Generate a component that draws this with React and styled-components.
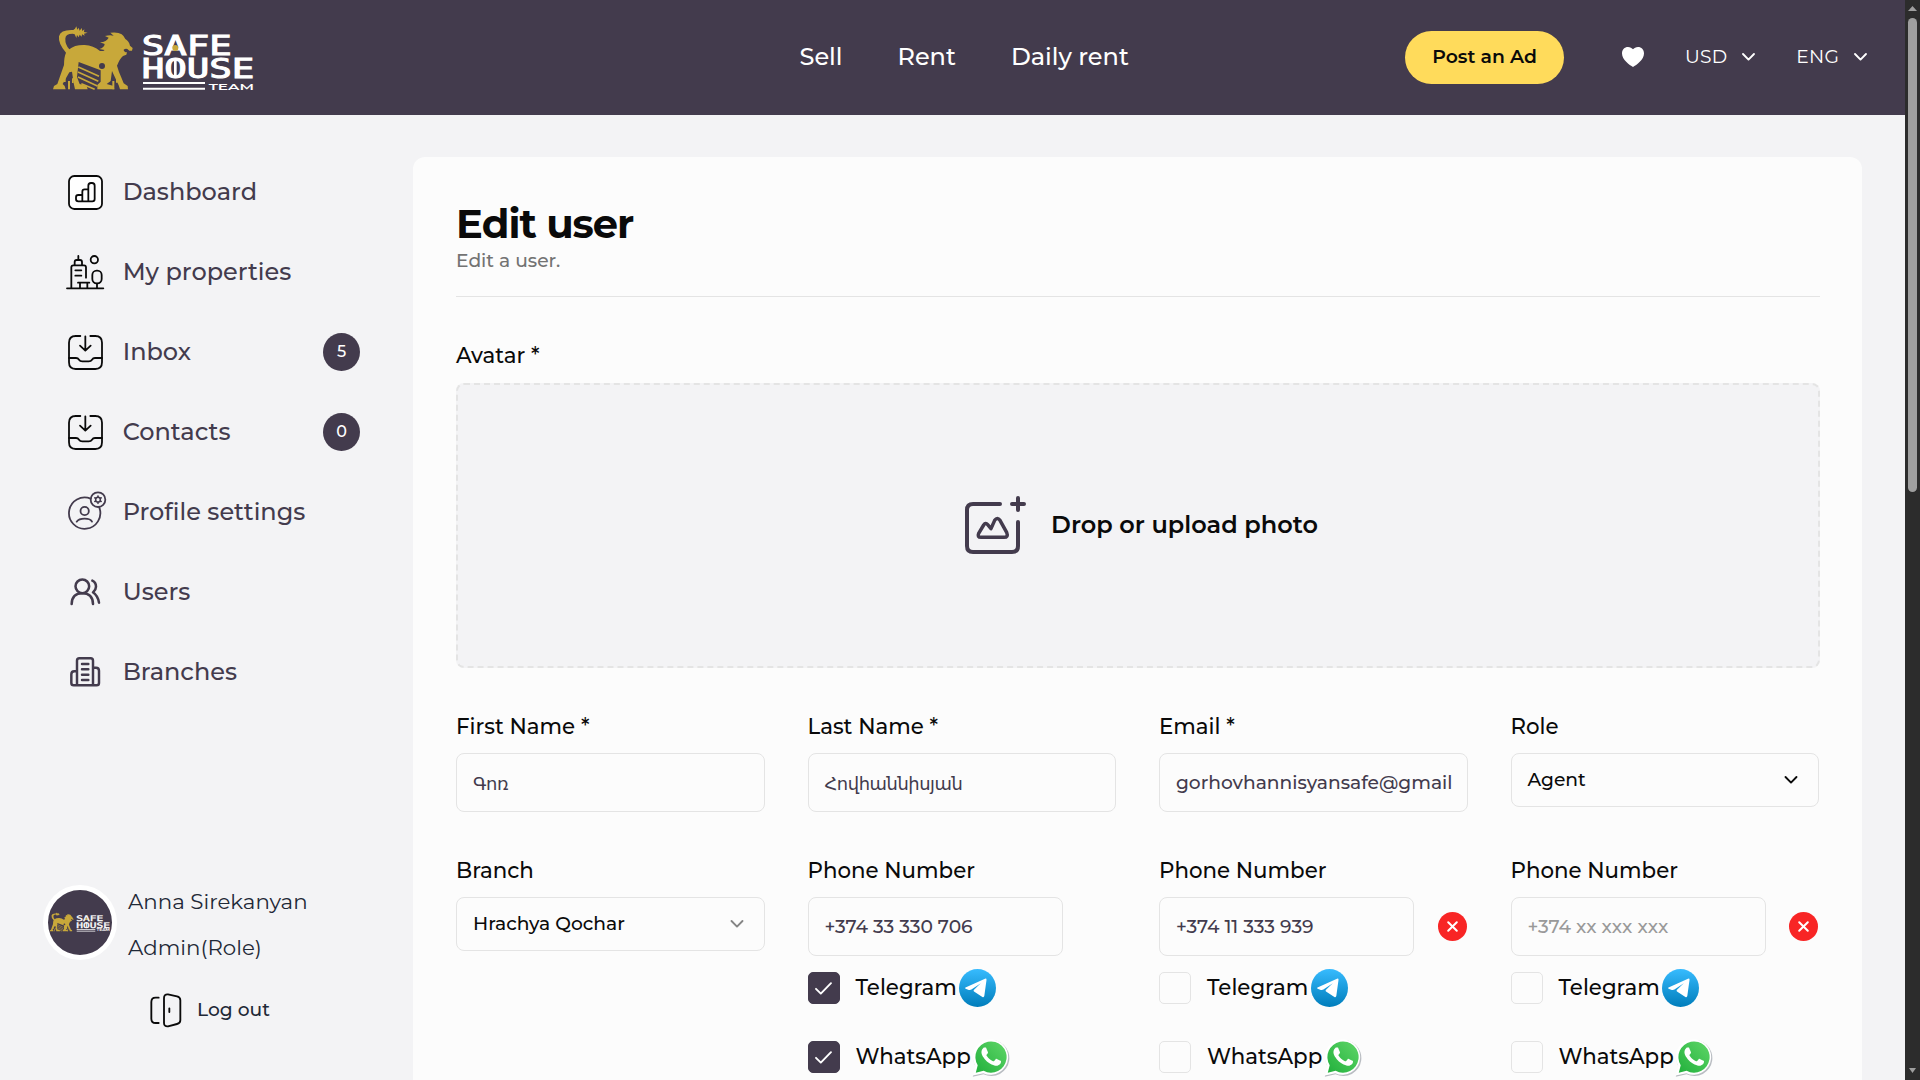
import React from 'react';
import styled, { createGlobalStyle } from 'styled-components';

const color = {
  plum: '#433b4d',
  page: '#f3f3f5',
  card: '#fcfcfc',
  line: '#e4e4e4',
  gold: '#c8a83a',
  ink: '#0a0a0a',
  slate: '#1f2937',
};

const GlobalStyle = createGlobalStyle`
  *, *::before, *::after { box-sizing: border-box; }
  html, body { margin: 0; padding: 0; }
  body {
    font-family: Montserrat, "DejaVu Sans", sans-serif;
    font-weight: 500;
    color: ${color.ink};
    background: ${color.page};
    overflow: hidden;
  }
  svg { display: block; flex: none; overflow: visible; }
`;

const Window = styled.div`
  display: flex;
  width: 1920px;
  height: 1080px;
  overflow: hidden;
`;

const Page = styled.div`
  display: flex;
  flex-direction: column;
  width: 1905px;
  height: 1080px;
  overflow: hidden;
`;

/* Header */
const Header = styled.header`
  flex: none;
  display: flex;
  align-items: center;
  height: 115px;
  padding: 0 38px 2px 44px;
  background: ${color.plum};
  color: #fff;
`;

const Nav = styled.nav`
  display: flex;
  gap: 55px;
  margin-left: 535.5px;
  font-size: 24px;
  line-height: 32px;
  white-space: nowrap;
`;

const Actions = styled.div`
  display: flex;
  align-items: center;
  margin-left: auto;
`;

const PostButton = styled.button`
  width: 159px;
  height: 53px;
  padding: 0;
  margin: 2px 58px 0 0;
  border: 0;
  border-radius: 27px;
  background: #ffdb5b;
  color: ${color.ink};
  font: 600 18.8px/24px Montserrat, sans-serif;
  padding-bottom: 2px;
`;

const Picker = styled.div`
  display: flex;
  align-items: center;
  gap: 15px;
  margin-left: 41px;
  font-size: 18.67px;
  font-weight: 400;
  line-height: 24px;
  letter-spacing: 0.2px;
`;

/* Sidebar */
const Body = styled.div`
  flex: 1;
  min-height: 0;
  display: flex;
`;

const Sidebar = styled.aside`
  flex: none;
  display: flex;
  flex-direction: column;
  width: 413px;
  height: 965px;
  padding-top: 36px;
`;

const MenuItem = styled.a`
  display: flex;
  align-items: center;
  height: 80px;
  padding: 0 53px 0 66px;
  font-size: 24px;
  line-height: 32px;
  color: ${color.plum};
`;

const MenuLabel = styled.span`
  margin: 2px 0 0 18.7px;
`;

const Badge = styled.span`
  display: flex;
  align-items: center;
  justify-content: center;
  width: 37px;
  height: 38px;
  margin: 1px 0 0 auto;
  border-radius: 50%;
  background: ${color.plum};
  color: #fff;
  font-size: 16px;
  line-height: 20px;
`;

const Account = styled.div`
  display: flex;
  gap: 11px;
  margin-top: auto;
  padding-left: 43px;
  align-items: center;
`;

const Avatar = styled.div`
  display: flex;
  align-items: center;
  justify-content: center;
  width: 74px;
  height: 75px;
  border: 5px solid #fff;
  border-radius: 50%;
  background: ${color.plum};
`;

const AccountText = styled.div`
  display: flex;
  flex-direction: column;
  font-size: 21.33px;
  font-weight: 400;
  line-height: 46px;
  color: ${color.slate};
  margin-top: 4px;
`;

const LogOut = styled.a`
  display: flex;
  align-items: center;
  gap: 15px;
  margin: 22px 0 52px 150px;
  font-size: 18.67px;
  line-height: 28px;
  color: ${color.slate};
`;

/* Form card */
const Card = styled.main`
  flex: none;
  width: 1449px;
  height: 1100px;
  margin-top: 42px;
  padding: 43px 42px 0 43px;
  border-radius: 12px;
  background: ${color.card};
`;

const Title = styled.h1`
  margin: 0;
  font-size: 40px;
  font-weight: 700;
  line-height: 48px;
  letter-spacing: -1px;
`;

const Subtitle = styled.p`
  margin: 0;
  font-size: 18.67px;
  line-height: 26px;
  color: #737373;
`;

const Divider = styled.hr`
  margin: 22px 0 42px;
  border: 0;
  height: 1px;
  background: ${color.line};
`;

const Label = styled.div`
  font-size: 21.33px;
  line-height: 32px;
  white-space: nowrap;
`;

const DropZone = styled.div`
  display: flex;
  align-items: center;
  justify-content: center;
  gap: 25px;
  height: 285px;
  margin: 12px 0 42px;
  padding: 0 0 2px 7px;
  border: 2px dashed ${color.line};
  border-radius: 8px;
  background: ${color.page};
  font-size: 24px;
  font-weight: 600;
  line-height: 32px;
`;

const FormGrid = styled.div`
  display: grid;
  grid-template-columns: repeat(4, 308.5px);
  justify-content: start;
  column-gap: 43px;
  row-gap: 42px;
`;

const Field = styled.div`
  display: flex;
  flex-direction: column;
  min-width: 0;
`;

const InputRow = styled.div`
  display: flex;
  align-items: center;
  justify-content: space-between;
  margin-top: 11px;
`;

const InputBox = styled.div`
  width: ${(p) => p.$width || '100%'};
  height: 59px;
  padding: ${(p) => (p.$armenian ? '1px 16px 0' : '0 16px')};
  border: 1px solid ${color.line};
  border-radius: 8px;
  font-size: ${(p) => (p.$armenian ? '17.9px' : '18.67px')};
  letter-spacing: ${(p) => (p.$armenian ? '-0.45px' : 'normal')};
  line-height: 57px;
  color: ${(p) => (p.$placeholder ? '#999' : color.plum)};
  white-space: nowrap;
  overflow: hidden;
`;

const SelectBox = styled.div`
  display: flex;
  align-items: center;
  justify-content: space-between;
  height: 54px;
  margin-top: 11px;
  padding: 0 20px 0 16px;
  border: 1px solid ${color.line};
  border-radius: 8px;
  font-size: 18.67px;
  line-height: 52px;
`;

const RemoveButton = styled.button`
  display: flex;
  align-items: center;
  justify-content: center;
  width: 29px;
  height: 29px;
  margin-right: 1px;
  padding: 0;
  border: 0;
  border-radius: 50%;
  background: #f82525;
`;

const CheckRow = styled.label`
  display: flex;
  align-items: center;
  height: 32px;
  margin-top: ${(p) => (p.$first ? '16px' : '37px')};
  font-size: 21.33px;
  line-height: 30px;
`;

const CheckBox = styled.span`
  display: flex;
  align-items: center;
  justify-content: center;
  width: 32px;
  height: 32px;
  margin-right: 16px;
  border: 1px solid ${(p) => (p.$on ? color.plum : color.line)};
  border-radius: 5px;
  background: ${(p) => (p.$on ? color.plum : color.card)};
`;

const ChannelName = styled.span`
  margin-bottom: 2px;
`;

const ChannelIcon = styled.span`
  margin-left: ${(p) => p.$gap};
`;

/* Scrollbar */
const ScrollTrack = styled.div`
  display: flex;
  flex-direction: column;
  align-items: center;
  width: 15px;
  height: 1080px;
  padding: 6px 0 7px;
  background: #2c2c2c;
`;

const ScrollThumb = styled.div`
  width: 9px;
  height: 474px;
  margin: 7px 0 auto;
  border-radius: 5px;
  background: #9f9f9f;
`;

const Mark = styled.text`
  font-family: "DejaVu Sans Mono", monospace;
  font-weight: 400;
  font-size: 77px;
  fill: #fff;
  stroke: #fff;
  stroke-width: 3px;
`;

const TeamMark = styled.text`
  font-family: Montserrat, sans-serif;
  font-weight: 600;
  font-size: 27px;
  fill: #fff;
`;

function Logo({ width }) {
  return (
    <svg width={width} height={(width * 84) / 220} viewBox="0 0 660 252">
      <path
        fill={color.gold}
        d="M27 223 L30 213 L40 207 L60 150 Q60 126 66 113 Q42 86 45 64 Q50 43 88 45 L93 41 L97 34 L100 44 L104 38 L107 47 L113 39 L115 48 L121 43 L120 51 L131 53 L120 56 L122 62 L114 58 L113 65 L107 59 L104 67 L99 60 L97 69 L92 58 L86 56 Q64 56 64 71 Q63 88 76 103 Q92 89 122 90 Q148 92 168 108 L178 108 L182 105 L166 102 Q181 98 182 87 L168 82 Q188 80 194 68 L183 63 Q198 59 209 62 L199 53 Q222 50 233 58 Q241 64 244 72 Q255 78 258 92 L266 99 L264 107 L256 107 L250 102 Q244 100 239 104 Q239 111 249 112 L247 119 L237 123 Q228 130 219 152 Q224 170 231 185 L239 205 L251 213 L252 223 L228 223 L224 211 L204 168 L200 198 L188 207 L209 213 L211 223 L160 223 L160 210 L170 200 L170 166 L104 141 L99 186 L107 207 L128 213 L131 223 L93 223 L89 205 L84 170 L76 172 L56 207 L62 213 L65 223 Z"
      />
      <circle cx="174" cy="153" r="9" fill={color.plum} />
      <g stroke={color.gold} strokeWidth="5" fill="none">
        <path d="M103 156 L165 184 M102 171 L163 199 M102 186 L160 213 M112 206 L152 223" />
      </g>
      <path
        fill={color.gold}
        d="M72 198h6v25h-6z M60 189h5v12h-5z M84 190h5v14h-5z M205 198h6v25h-6z M190 190h6v11h-6z M216 192h5v11h-5z"
      />
      <Mark x="293" y="120" textLength="270" lengthAdjust="spacingAndGlyphs">SAFE</Mark>
      <Mark x="293" y="189" textLength="338" lengthAdjust="spacingAndGlyphs">HOUSE</Mark>
      <TeamMark x="494" y="224" textLength="136" lengthAdjust="spacingAndGlyphs">TEAM</TeamMark>
      <circle cx="394" cy="99" r="9" fill={color.gold} />
      <path fill="#fff" d="M297 201h186v6H297z M297 218h186v6H297z M390 134h8v54h-8z" />
    </svg>
  );
}

const Chevron = ({ stroke = '#fff', w = 13 }) => (
  <svg width={w} height="8" viewBox="0 0 13 8" fill="none" stroke={stroke} strokeWidth="1.9" strokeLinecap="round" strokeLinejoin="round">
    <path d="M1 1 6.5 6.6 12 1" />
  </svg>
);

const Heart = () => (
  <svg width="22" height="20" viewBox="0 0 22 20" fill="#fff">
    <path d="M11 20C7.500 17.700 0 12.600 0 6.400 0 2.700 2.600 0 6 0c2.100 0 3.900 1 5 2.300C12.100 1 13.900 0 16 0c3.400 0 6 2.700 6 6.400C22 12.600 14.500 17.700 11 20z" />
  </svg>
);

const MenuIcon = ({ y, stroke = '#0a0a0a', sw = 5.4, children }) => (
  <svg width="38" height="38" viewBox={`78 ${y} 114 114`} fill="none" stroke={stroke} strokeWidth={sw} strokeLinecap="round" strokeLinejoin="round">
    {children}
  </svg>
);

const DashboardIcon = () => (
  <MenuIcon y={66}>
    <rect x="87" y="78" width="99" height="99" rx="16" fill="#fff" />
    <path d="M108 142 q0-7 7-7 h12 v19 h-12 q-7 0-7-7z M127 154 V125 q0-7 7-7 h11 V154z M145 154 V107 q0-8 8-8 h3 q8 0 8 8 v40 q0 7-7 7z" />
  </MenuIcon>
);

const PropertiesIcon = () => (
  <MenuIcon y={306}>
    <path d="M81 415H190 M94 414V352q0-6 6-6h32q6 0 6 6v31 M104 345v-9q0-6 6-6h10q6 0 6 6v9 M115 329v-11" />
    <path d="M106 361h18 M106 377h18 M114 398h34 M120 399v15 M142 399v15 M171 401v13" />
    <rect x="157" y="362" width="28" height="38" rx="13" />
    <circle cx="163" cy="329" r="11" />
  </MenuIcon>
);

const InboxIcon = () => (
  <MenuIcon y={546}>
    <path d="M121 558H107q-20 0-20 20v59q0 20 20 20h59q20 0 20-20v-59q0-20-20-20H151" />
    <path d="M136 559v42 M120 587l16 15 16-15 M87 624h21q6 0 9 5t10 5h19q7 0 10-5t9-5h21" />
  </MenuIcon>
);

const ProfileIcon = () => (
  <MenuIcon y={126} stroke={color.plum} sw={5.4}>
    <path d="M152 146a47 47 0 1 0 26 27" />
    <circle cx="134" cy="183" r="12.500" />
    <path d="M110 215q6-9 24-9t22 9" />
    <circle cx="174" cy="149" r="22" />
    <circle cx="174" cy="149" r="7" strokeWidth="4.500" />
    <path strokeWidth="5" d="M174 138v2 M174 158v2 M164.500 143.500l2 1 M181.500 153.500l2 1 M164.500 154.500l2-1 M181.500 144.500l2-1" />
  </MenuIcon>
);

const UsersIcon = () => (
  <MenuIcon y={366} stroke={color.plum} sw={7.6}>
    <circle cx="127" cy="409" r="20.500" />
    <path d="M95 462q1-32 32-32t32 32 M157 392q11 5 11 18 0 9-9 17 15 11 18 31" />
  </MenuIcon>
);

const BranchesIcon = () => (
  <MenuIcon y={606} stroke={color.plum} sw={7.4}>
    <path d="M111 706V632q0-7 7-7h34q7 0 7 7v74 M111 664h-8q-9 0-9 9v26q0 7 7 7h69q7 0 7-7v-37q0-9-9-9h-9" />
    <path d="M126 642h19 M126 658h19 M126 674h19 M126 690h19" />
  </MenuIcon>
);

const DoorIcon = () => (
  <svg width="32" height="36" viewBox="359 366 96 108" fill="none" stroke="#0a0a0a" strokeWidth="5.500" strokeLinecap="round" strokeLinejoin="round">
    <path d="M385 383h-9q-13 0-13 13v50q0 13 13 13h9" />
    <path d="M413 373l27 6q10 2 10 12v60q0 9-10 11l-27 7q-12 1-12-10V384q0-12 12-11z M417 415v11" />
  </svg>
);

const PhotoIcon = () => (
  <svg width="61" height="58" viewBox="75 78 183 174" fill="none" stroke={color.plum} strokeWidth="12" strokeLinecap="round" strokeLinejoin="round">
    <path d="M180 102h-81q-18 0-18 18v108q0 18 18 18h117q18 0 18-18v-72" />
    <path d="M234 84v36 M216 102h36" />
    <path strokeWidth="10.500" d="M123 202q-12 0-7-12l15-25q6-8 12-1l10 12 11-25q8-11 16 0l20 36q6 15-8 15z" />
  </svg>
);

const CheckIcon = () => (
  <svg width="17" height="13" viewBox="0 0 17 13" fill="none" stroke="#fff" strokeWidth="1.900" strokeLinecap="round" strokeLinejoin="round">
    <path d="M1 6.800 5.800 11.600 16 1.200" />
  </svg>
);

const CrossIcon = () => (
  <svg width="11" height="11" viewBox="0 0 11 11" stroke="#fff" strokeWidth="2" strokeLinecap="round">
    <path d="M1.200 1.200 9.800 9.800 M9.800 1.200 1.200 9.800" />
  </svg>
);

const TelegramIcon = () => (
  <svg width="37" height="38" viewBox="0 0 37 38">
    <defs>
      <linearGradient id="telegram" x1="0" y1="0" x2="0" y2="1">
        <stop offset="0" stopColor="#37bbfe" />
        <stop offset="1" stopColor="#007dbb" />
      </linearGradient>
    </defs>
    <ellipse cx="18.500" cy="19" rx="18.500" ry="19" fill="url(#telegram)" />
    <path fill="#fff" d="M6.500 18.500 26 9.700Q27.700 9.100 27.500 10.900L25.300 27Q24.900 28.700 23.400 27.900L15 22.600Q14 21.700 15 20.700L21.800 14.200 12.400 20.600Q11.200 21.300 9.800 20.900L6.600 19.800Q5.500 19.100 6.500 18.500Z" />
  </svg>
);

const WhatsAppIcon = () => (
  <svg width="37" height="40" viewBox="0 0 37 40">
    <defs>
      <linearGradient id="whatsapp" x1="1" y1="0" x2="0" y2="1">
        <stop offset="0" stopColor="#5fd668" />
        <stop offset="1" stopColor="#22b03c" />
      </linearGradient>
    </defs>
    <path fill="#b9bdc2" d="M0.800 39.800 3.600 29.800A18 18 0 1 1 11.500 37.300Z" />
    <path fill="#fff" d="M0.600 38.600 3.200 29A17.700 17.700 0 1 1 11.300 36.200Z" />
    <path fill="url(#whatsapp)" d="M3.800 35.800 5.700 28.200A15.600 15.600 0 1 1 11.600 33.800Z" />
    <path
      fill="#fff"
      transform="translate(-0.300 0.200) scale(1.620)"
      d="M17.472 14.382c-.297-.149-1.758-.867-2.030-.967-.273-.099-.471-.148-.670.150-.197.297-.767.966-.940 1.164-.173.199-.347.223-.644.075-.297-.150-1.255-.463-2.390-1.475-.883-.788-1.480-1.761-1.653-2.059-.173-.297-.018-.458.130-.606.134-.133.298-.347.446-.520.149-.174.198-.298.298-.497.099-.198.050-.371-.025-.520-.075-.149-.669-1.612-.916-2.207-.242-.579-.487-.500-.669-.510-.173-.008-.371-.010-.570-.010-.198 0-.520.074-.792.372-.272.297-1.040 1.016-1.040 2.479 0 1.462 1.065 2.875 1.213 3.074.149.198 2.096 3.200 5.077 4.487.709.306 1.262.489 1.694.625.712.227 1.360.195 1.871.118.571-.085 1.758-.719 2.006-1.413.248-.694.248-1.289.173-1.413-.074-.124-.272-.198-.570-.347z"
    />
  </svg>
);

const menu = [
  { label: 'Dashboard', Icon: DashboardIcon },
  { label: 'My properties', Icon: PropertiesIcon },
  { label: 'Inbox', Icon: InboxIcon, count: '5' },
  { label: 'Contacts', Icon: InboxIcon, count: '0' },
  { label: 'Profile settings', Icon: ProfileIcon },
  { label: 'Users', Icon: UsersIcon },
  { label: 'Branches', Icon: BranchesIcon },
];

const phones = [
  { value: '+374 33 330 706', checked: true },
  { value: '+374 11 333 939', removable: true },
  { value: '+374 xx xxx xxx', removable: true, placeholder: true },
];

function TextField({ label, value, armenian }) {
  return (
    <Field>
      <Label>{label}</Label>
      <InputRow>
        <InputBox $armenian={armenian}>{value}</InputBox>
      </InputRow>
    </Field>
  );
}

function SelectField({ label, value, stroke }) {
  return (
    <Field>
      <Label>{label}</Label>
      <SelectBox>
        {value}
        <Chevron stroke={stroke} w={14} />
      </SelectBox>
    </Field>
  );
}

function PhoneField({ value, checked, removable, placeholder }) {
  return (
    <Field>
      <Label>Phone Number</Label>
      <InputRow>
        <InputBox $width="255px" $placeholder={placeholder}>{value}</InputBox>
        {removable && <RemoveButton><CrossIcon /></RemoveButton>}
      </InputRow>
      <CheckRow $first>
        <CheckBox $on={checked}>{checked && <CheckIcon />}</CheckBox>
        <ChannelName>Telegram</ChannelName>
        <ChannelIcon $gap="2.5px"><TelegramIcon /></ChannelIcon>
      </CheckRow>
      <CheckRow>
        <CheckBox $on={checked}>{checked && <CheckIcon />}</CheckBox>
        <ChannelName>WhatsApp</ChannelName>
        <ChannelIcon $gap="1.5px"><WhatsAppIcon /></ChannelIcon>
      </CheckRow>
    </Field>
  );
}

export default function App() {
  return (
    <Window>
      <GlobalStyle />
      <Page>
        <Header>
          <Logo width={220} />
          <Nav>
            <span>Sell</span>
            <span>Rent</span>
            <span>Daily rent</span>
          </Nav>
          <Actions>
            <PostButton>Post an Ad</PostButton>
            <Heart />
            <Picker>USD <Chevron /></Picker>
            <Picker>ENG <Chevron /></Picker>
          </Actions>
        </Header>
        <Body>
          <Sidebar>
            {menu.map(({ label, Icon, count }) => (
              <MenuItem key={label}>
                <Icon />
                <MenuLabel>{label}</MenuLabel>
                {count && <Badge>{count}</Badge>}
              </MenuItem>
            ))}
            <Account>
              <Avatar><Logo width={66} /></Avatar>
              <AccountText>
                <span>Anna Sirekanyan</span>
                <span>Admin(Role)</span>
              </AccountText>
            </Account>
            <LogOut><DoorIcon />Log out</LogOut>
          </Sidebar>
          <Card>
            <Title>Edit user</Title>
            <Subtitle>Edit a user.</Subtitle>
            <Divider />
            <Label>Avatar *</Label>
            <DropZone><PhotoIcon />Drop or upload photo</DropZone>
            <FormGrid>
              <TextField label="First Name *" value="Գոռ" armenian />
              <TextField label="Last Name *" value="Հովհաննիսյան" armenian />
              <TextField label="Email *" value="gorhovhannisyansafe@gmail" />
              <SelectField label="Role" value="Agent" stroke={color.ink} />
              <SelectField label="Branch" value="Hrachya Qochar" stroke="#858585" />
              {phones.map((phone) => (
                <PhoneField key={phone.value} {...phone} />
              ))}
            </FormGrid>
          </Card>
        </Body>
      </Page>
      <ScrollTrack>
        <svg width="9" height="5" viewBox="0 0 9 5"><path d="M4.500 0 9 5H0z" fill="#9f9f9f" /></svg>
        <ScrollThumb />
        <svg width="7" height="5" viewBox="0 0 7 5"><path d="M0 0h7L3.500 5z" fill="#9f9f9f" /></svg>
      </ScrollTrack>
    </Window>
  );
}
